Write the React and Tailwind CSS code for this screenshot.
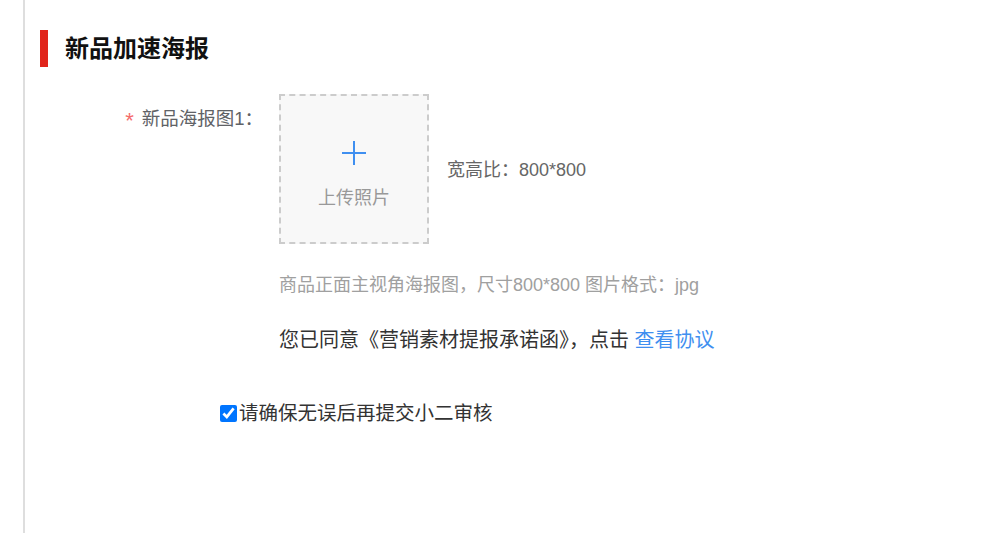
import React from "react";

const FONT = "font-['Liberation_Sans','Noto_Sans_CJK_SC',sans-serif]";

function UploadBox() {
  return (
    <div className="flex h-[150px] w-[150px] shrink-0 flex-col items-center border-2 border-dashed border-[#cccccc] bg-[#f8f8f8] pt-[45px]">
      <svg width="24" height="24" viewBox="0 0 24 24">
        <path d="M12 0v24M0 12h24" stroke="#3f8ff0" strokeWidth="2" fill="none" />
      </svg>
      <span className="mt-[21px] text-[18px] leading-[24px] text-[#999]">上传照片</span>
    </div>
  );
}

export default function App() {
  return (
    <div className={`h-[533px] w-[1006px] overflow-hidden bg-white ${FONT}`}>
      <div className="ml-[23px] h-full border-l-2 border-[#dedede] pl-[15px] pt-[30px]">
        {/* section title */}
        <div className="flex h-[37px] items-center">
          <span className="h-[37px] w-[8px] bg-[#e1251b]" />
          <h2 className="ml-[17px] text-[24px] font-bold leading-none text-[#111]">新品加速海报</h2>
        </div>

        {/* poster upload row */}
        <div className="mt-[27px] flex">
          <div className="flex w-[223px] shrink-0 items-center justify-end self-start pt-[12px] text-[18.5px] leading-[26px] text-[#606266]">
            <span className="mr-[8px] mt-[4px] text-[22px] leading-none text-[#f56c6c]">*</span>
            <span>新品海报图1：</span>
          </div>
          <div className="ml-[16px]">
            <UploadBox />
          </div>
          <div className="ml-[18px] mt-[64px] text-[18px] leading-[24px] text-[#666]">宽高比：800*800</div>
        </div>

        <p className="ml-[239px] mt-[29px] text-[18px] leading-[24px] text-[#a0a0a0]">
          商品正面主视角海报图，尺寸800*800 图片格式：jpg
        </p>

        <p className="ml-[239px] mt-[29px] text-[20px] leading-[28px] text-[#333]">
          您已同意《营销素材提报承诺函》，点击 <a className="text-[#3f8ff0]">查看协议</a>
        </p>

        <label className="ml-[180px] mt-[45px] flex items-center gap-[2px] text-[19.5px] leading-[28px] text-[#333]">
          <input type="checkbox" defaultChecked className="h-[17px] w-[17px] accent-[#0075ff]" />
          请确保无误后再提交小二审核
        </label>
      </div>
    </div>
  );
}
